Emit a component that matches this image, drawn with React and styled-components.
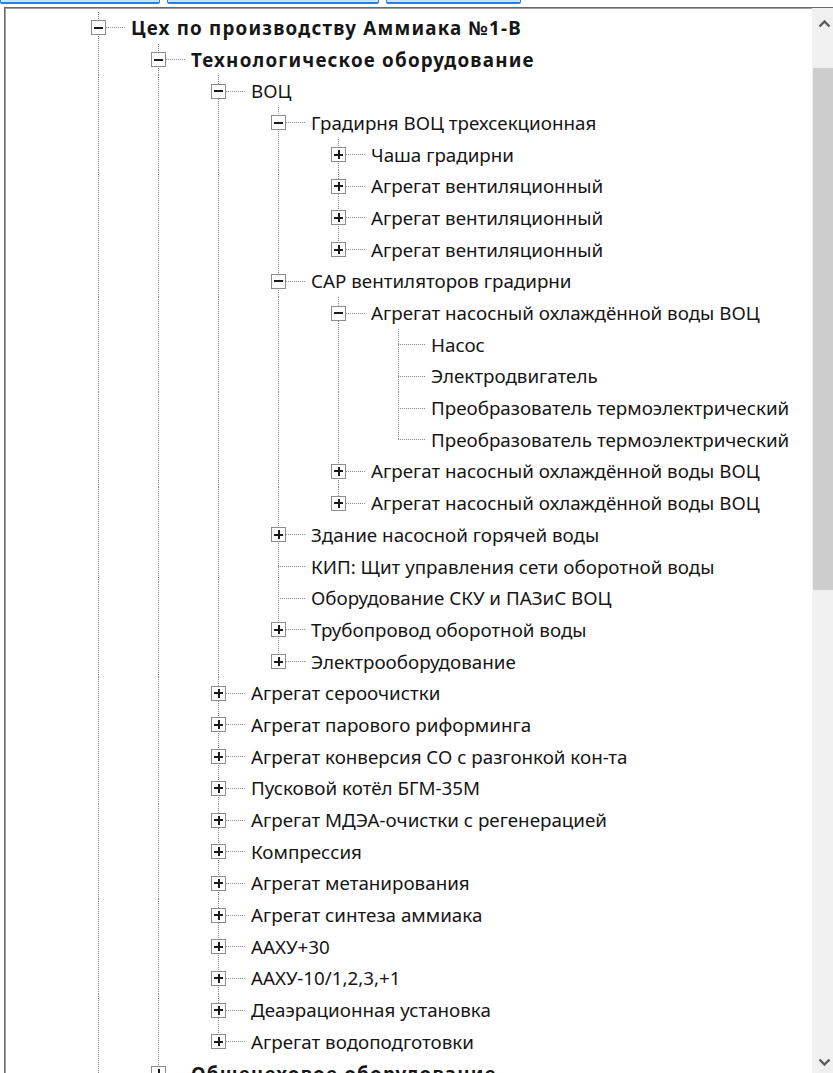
import React from 'react'
import styled, {createGlobalStyle, css} from 'styled-components'

const ROW = 31.7
const INDENT = 60
const DOT = '#8a8a8a'

const GlobalStyle = createGlobalStyle`
  html, body {
    margin: 0;
    padding: 0;
    overflow: hidden;
    background: #fff;
  }
  body {
    font-family: "Noto Sans", "Open Sans", "Liberation Sans", sans-serif;
  }
`

const leaf = title => ({title})
const closed = title => ({title, children: [{title: '…'}]})

const data = {
  title: 'Цех по производству Аммиака №1-В', bold: true, open: true, children: [
    {
      title: 'Технологическое оборудование', bold: true, open: true, children: [
        {
          title: 'ВОЦ', open: true, children: [
            {
              title: 'Градирня ВОЦ трехсекционная', open: true, children: [
                closed('Чаша градирни'),
                closed('Агрегат вентиляционный'),
                closed('Агрегат вентиляционный'),
                closed('Агрегат вентиляционный'),
              ]
            },
            {
              title: 'САР вентиляторов градирни', open: true, children: [
                {
                  title: 'Агрегат насосный охлаждённой воды ВОЦ', open: true, children: [
                    leaf('Насос'),
                    leaf('Электродвигатель'),
                    leaf('Преобразователь термоэлектрический'),
                    leaf('Преобразователь термоэлектрический'),
                  ]
                },
                closed('Агрегат насосный охлаждённой воды ВОЦ'),
                closed('Агрегат насосный охлаждённой воды ВОЦ'),
              ]
            },
            closed('Здание насосной горячей воды'),
            leaf('КИП: Щит управления сети оборотной воды'),
            leaf('Оборудование СКУ и ПАЗиС ВОЦ'),
            closed('Трубопровод оборотной воды'),
            closed('Электрооборудование'),
          ]
        },
        closed('Агрегат сероочистки'),
        closed('Агрегат парового риформинга'),
        closed('Агрегат конверсия СО с разгонкой кон-та'),
        closed('Пусковой котёл БГМ-35М'),
        closed('Агрегат МДЭА-очистки с регенерацией'),
        closed('Компрессия'),
        closed('Агрегат метанирования'),
        closed('Агрегат синтеза аммиака'),
        closed('ААХУ+30'),
        closed('ААХУ-10/1,2,3,+1'),
        closed('Деаэрационная установка'),
        closed('Агрегат водоподготовки'),
      ]
    },
    {title: 'Общецеховое оборудование', bold: true, children: [{title: '…'}]},
  ]
}

// flatten visible nodes; guides[i] tells whether the ancestor column i keeps its line going
const flatten = (nodes, guides, more, out) => {
  nodes.forEach((node, i) => {
    const last = i === nodes.length - 1 && !more
    out.push({node, guides, last})
    if (node.open && node.children) flatten(node.children, [...guides, !last], false, out)
  })
  return out
}

const rows = flatten([data], [], true, [])

const vDots = 'repeating-linear-gradient(to bottom, ' + DOT + ' 0 1px, transparent 1px 2px)'
const hDots = 'repeating-linear-gradient(to right, ' + DOT + ' 0 1px, transparent 1px 2px)'

const Toolbar = styled.div`
  display: flex;
  align-items: flex-end;
  gap: 7px;
  height: 4px;
  overflow: hidden;
`

const ToolButton = styled.div`
  flex: none;
  width: ${p => p.$w}px;
  height: 20px;
  box-sizing: border-box;
  border: 1px solid #2f7ed6;
  border-bottom-width: 2px;
  border-radius: 2px;
  background: #cfe3f8;
`

const Frame = styled.div`
  display: flex;
  box-sizing: border-box;
  width: 834px;
  height: 1072px;
  margin: 3px 0 0 4px;
  border: 1px solid #6a6a6a;
  box-shadow: inset 1px 1px 0 #a0a0a0;
`

const TreeArea = styled.div`
  flex: 1;
  overflow: hidden;
  padding: 4px 0 0 63px;
`

const Row = styled.div`
  display: flex;
  height: ${ROW}px;
  white-space: nowrap;
`

const Guide = styled.div`
  flex: none;
  width: ${INDENT}px;
  ${p => p.$line && css`
    background: ${vDots} 30px 0 / 1px 100% no-repeat;
  `}
`

const NodeCell = styled.div`
  flex: none;
  display: flex;
  align-items: center;
  width: ${INDENT}px;
  padding-left: 23px;
  box-sizing: border-box;
  background:
    ${vDots} 30px 0 / 1px 50% no-repeat,
    ${p => p.$last ? 'none' : vDots + ' 30px 100% / 1px 50% no-repeat'},
    ${hDots} 30px 50% / 27px 1px no-repeat;
`

const Toggle = styled.span`
  display: grid;
  place-items: center;
  width: 15px;
  height: 15px;
  box-sizing: border-box;
  border: 1px solid #8c8c8c;
  background: #fff;

  &::before, &::after {
    content: '';
    grid-area: 1 / 1;
    background: #1a1a1a;
  }
  &::before {
    width: 9px;
    height: 2px;
  }
  &::after {
    width: ${p => p.$open ? 0 : 2}px;
    height: 9px;
  }
`

const Label = styled.span`
  display: flex;
  align-items: center;
  padding-left: 3px;
  font-size: 18.8px;
  font-weight: ${p => p.$bold ? 700 : 400};
  letter-spacing: ${p => p.$bold ? 1.2 : 0}px;
  color: #161616;
`

const ScrollBar = styled.div`
  flex: none;
  display: flex;
  flex-direction: column;
  width: 25px;
  background: #f0f0f0;
`

const Arrow = styled.div`
  flex: none;
  display: flex;
  align-items: center;
  justify-content: center;
  height: 32px;
`

const Track = styled.div`
  flex: 1;
  padding: 28px 1px 0;
`

const Thumb = styled.div`
  height: 522px;
  background: #cdcdcd;
`

const Chevron = ({down}) => (
  <svg width="13" height="8" viewBox="0 0 13 8">
    <polyline
      points={down ? '1.5,1.5 6.5,6.5 11.5,1.5' : '1.5,6.5 6.5,1.5 11.5,6.5'}
      fill="none" stroke="#5a5a5a" strokeWidth="2.4"/>
  </svg>
)

export default function App() {
  return (
    <>
      <GlobalStyle/>
      <Toolbar>
        <ToolButton $w={160}/>
        <ToolButton $w={212}/>
        <ToolButton $w={135}/>
      </Toolbar>
      <Frame>
        <TreeArea>
          {rows.map(({node, guides, last}, i) => (
            <Row key={i}>
              {guides.map((g, k) => <Guide key={k} $line={g}/>)}
              <NodeCell $last={last}>
                {node.children && <Toggle $open={node.open}/>}
              </NodeCell>
              <Label $bold={node.bold}>{node.title}</Label>
            </Row>
          ))}
        </TreeArea>
        <ScrollBar>
          <Arrow><Chevron/></Arrow>
          <Track><Thumb/></Track>
          <Arrow><Chevron down/></Arrow>
        </ScrollBar>
      </Frame>
    </>
  )
}
